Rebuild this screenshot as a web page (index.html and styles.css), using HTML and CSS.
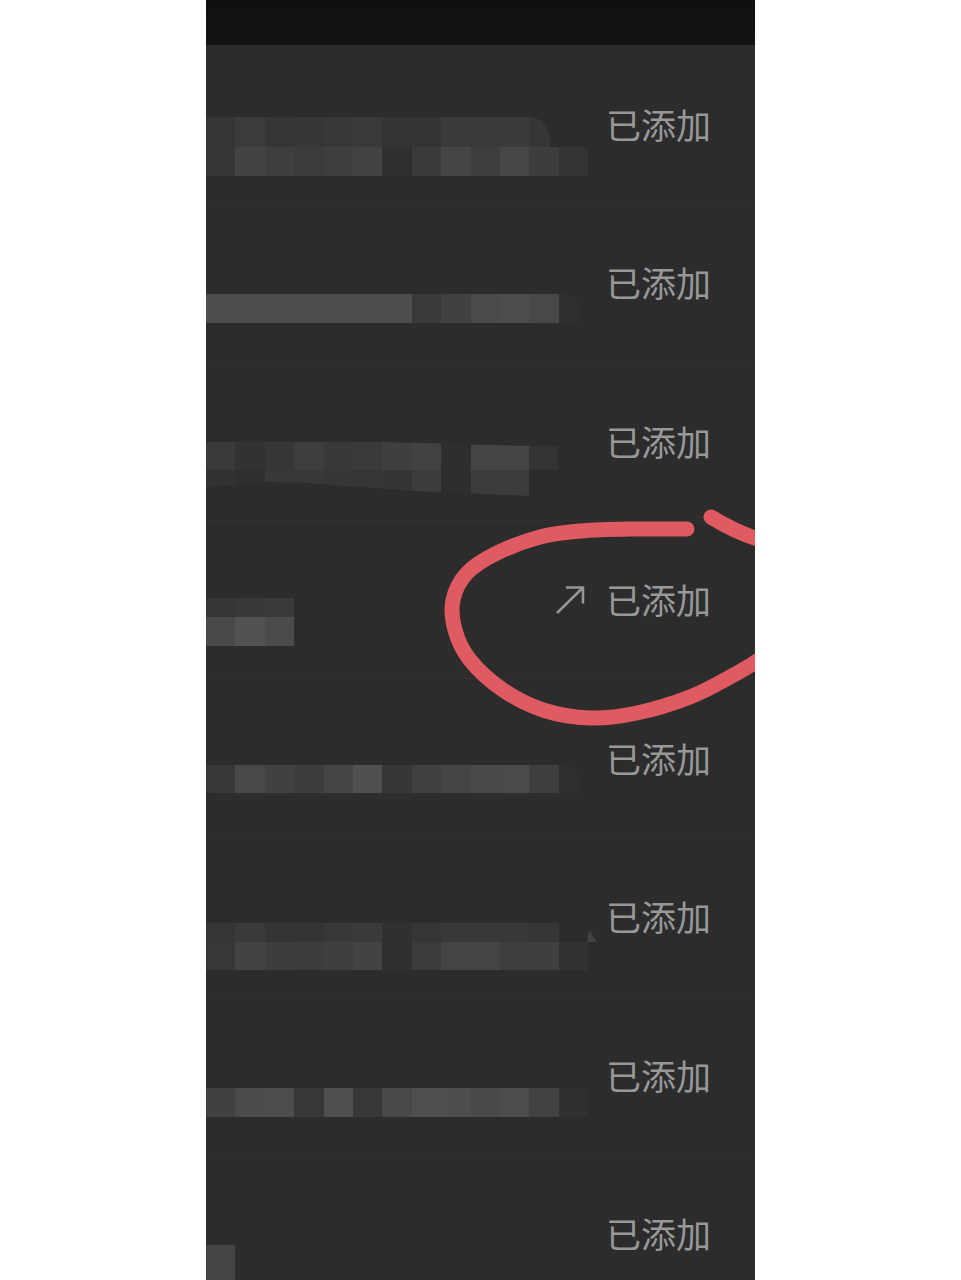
FILE: index.html
```html
<!DOCTYPE html>
<html lang="zh-CN">
<head>
<meta charset="utf-8">
<title>已添加</title>
<link rel="stylesheet" href="styles.css">
</head>
<body>
<main class="panel">
  <header class="topbar"></header>
  <ul class="list">
    <li class="row">
      <div class="mosaic m1">
        <i class="g35"></i><i class="g3b"></i><i class="g35"></i><i class="g36"></i><i class="g38"></i><i class="g39"></i><i class="g34"></i><i class="g34"></i><i class="g3a"></i><i class="g39"></i><i class="g3a"></i><i class="g36 corner"></i><i></i>
        <i class="g36"></i><i class="g43"></i><i class="g3e"></i><i class="g3b"></i><i class="g3f"></i><i class="g42"></i><i class="g2f"></i><i class="g3a"></i><i class="g45"></i><i class="g3e"></i><i class="g46"></i><i class="g3d"></i><i class="g33"></i>
      </div>
      <span class="status">已添加</span>
    </li>
    <li class="row">
      <div class="mosaic m2">
        <i class="g4d"></i><i class="g4d"></i><i class="g4d"></i><i class="g4c"></i><i class="g4c"></i><i class="g4d"></i><i class="g4d"></i><i class="g39"></i><i class="g41"></i><i class="g4a"></i><i class="g4c"></i><i class="g48"></i><i class="g2f tail"></i>
      </div>
      <span class="status">已添加</span>
    </li>
    <li class="row">
      <div class="mosaic m3">
        <i class="g3a"></i><i class="g32"></i><i class="g36"></i><i class="g3e"></i><i class="g38"></i><i class="g3a"></i><i class="g3f"></i><i class="g42"></i><i class="g2e"></i><i class="g45"></i><i class="g45"></i><i class="g33"></i>
        <i class="g32"></i><i class="g2f"></i><i class="g38"></i><i class="g38"></i><i class="g36"></i><i class="g35"></i><i class="g34"></i><i class="g3c"></i><i class="g2e"></i><i class="g3b"></i><i class="g3c"></i><i></i>
      </div>
      <span class="status">已添加</span>
    </li>
    <li class="row">
      <div class="mosaic m4">
        <i class="g35"></i><i class="g38"></i><i class="g3a"></i>
        <i class="g49"></i><i class="g52"></i><i class="g4b"></i>
      </div>
      <span class="status-group">
        <svg class="share" viewBox="0 0 30 30" aria-hidden="true"><path d="M2 27 L28 1.500 M11 1.500 H28 V17.500"/></svg>
        <span class="status">已添加</span>
      </span>
    </li>
    <li class="row">
      <div class="mosaic m5">
        <i class="g38"></i><i class="g48"></i><i class="g41"></i><i class="g3d"></i><i class="g45"></i><i class="g50"></i><i class="g36"></i><i class="g40"></i><i class="g44"></i><i class="g49"></i><i class="g4a"></i><i class="g3e"></i><i class="g2f tail"></i>
      </div>
      <span class="status">已添加</span>
    </li>
    <li class="row">
      <div class="mosaic m6">
        <i class="g35"></i><i class="g3a"></i><i class="g34"></i><i class="g34"></i><i class="g38"></i><i class="g3a"></i><i class="g30"></i><i class="g35"></i><i class="g38"></i><i class="g38"></i><i class="g38"></i><i class="g36"></i><i></i>
        <i class="g37"></i><i class="g43"></i><i class="g3d"></i><i class="g3c"></i><i class="g3f"></i><i class="g43"></i><i class="g2f"></i><i class="g3b"></i><i class="g44"></i><i class="g44"></i><i class="g3e"></i><i class="g3f"></i><i class="g32"></i>
      </div>
      <span class="status">已添加</span>
    </li>
    <li class="row">
      <div class="mosaic m7">
        <i class="g41"></i><i class="g4b"></i><i class="g4d"></i><i class="g37"></i><i class="g4f"></i><i class="g38"></i><i class="g48"></i><i class="g4f"></i><i class="g4e"></i><i class="g49"></i><i class="g4c"></i><i class="g42"></i><i class="g30"></i>
      </div>
      <span class="status">已添加</span>
    </li>
    <li class="row">
      <div class="mosaic m8"><i class="g44"></i></div>
      <span class="status">已添加</span>
    </li>
  </ul>
  <svg class="markup" viewBox="0 0 549 1280" aria-hidden="true">
    <path d="M481 529 C471.500 529 441.800 528.700 424 529 C406.200 529.300 389 529.700 374 531 C359 532.300 347.800 533.300 334 537 C320.200 540.700 303.200 547 291 553 C278.800 559 268.300 565.200 261 573 C253.700 580.800 249 590.500 247 600 C245 609.500 246.200 620 249 630 C251.800 640 256 650 264 660 C272 670 284.800 681.700 297 690 C309.200 698.300 322.500 705.300 337 710 C351.500 714.700 368.300 717.500 384 718 C399.700 718.500 414.300 716.500 431 713 C447.700 709.500 468.500 703 484 697 C499.500 691 512.200 683.500 524 677 C535.800 670.500 550 662 555 658"/>
    <path d="M505 517 C518 525 535 534 555 540"/>
  </svg>
</main>
</body>
</html>
```
FILE: styles.css
```css
* { box-sizing: border-box; }

html, body { margin: 0; padding: 0; background: #fff; }

.panel {
  position: relative;
  width: 549px;
  height: 1280px;
  margin: 0 auto;
  overflow: hidden;
  background: #2c2c2c;
}

.topbar { height: 45px; background: linear-gradient(#101010, #121212); }

.list { list-style: none; margin: 0; padding: 0; }

.row {
  display: flex;
  justify-content: space-between;
  align-items: flex-start;
  height: 158.5px;
  padding-right: 44px;
  border-bottom: 1px solid #313131;
}

.status {
  font-family: "Noto Sans CJK SC", "Noto Sans", sans-serif;
  font-size: 35px;
  line-height: 40px;
  color: #989898;
  white-space: nowrap;
}

.row > .status, .status-group { align-self: center; }

.status-group { display: flex; align-items: center; gap: 21px; }

.share { width: 30px; height: 30px; position: relative; top: 2px; }
.share path { fill: none; stroke: #969696; stroke-width: 2.5; }

.mosaic { display: grid; grid-template-columns: repeat(13, 29.4px); }

.m1 { margin-top: 72px; grid-template-rows: 30px 29px; }
.m2 { margin-top: 90.5px; grid-template-rows: 29px; }
.m3 {
  margin-top: 79px;
  grid-template-columns: repeat(12, 29.4px);
  grid-template-rows: 29px 26px;
  clip-path: polygon(0 1px, 176px 1px, 323px 5px, 352px 5px, 352px 29px, 323px 29px, 323px 55px, 207px 50px, 100px 42px, 60px 41px, 0 46px);
}
.m4 { margin-top: 77.5px; grid-template-columns: repeat(3, 29.4px); grid-template-rows: 19px 29px; }
.m5 { margin-top: 86px; grid-template-rows: 28px; box-shadow: 0 12px 8px -6px #2f2f2f; }
.m6 { position: relative; margin-top: 85.5px; grid-template-rows: 19px 28px; }
.m6::after {
  content: "";
  position: absolute;
  left: 381px;
  top: 7px;
  width: 10px;
  height: 12px;
  background: #414141;
  clip-path: polygon(20% 0, 100% 100%, 0 100%);
}
.m7 { margin-top: 92px; grid-template-rows: 29px; }
.m8 { margin-top: 90.5px; grid-template-columns: 29.4px; grid-template-rows: 40px; }

.corner { margin-right: 9px; border-top-right-radius: 20px 24px; }
.tail { margin-right: 7px; border-radius: 0 18px 8px 0; }

.g2e { background: #2e2e2e; }
.g2f { background: #2f2f2f; }
.g30 { background: #303030; }
.g32 { background: #323232; }
.g33 { background: #333333; }
.g34 { background: #343434; }
.g35 { background: #353535; }
.g36 { background: #363636; }
.g37 { background: #373737; }
.g38 { background: #383838; }
.g39 { background: #393939; }
.g3a { background: #3a3a3a; }
.g3b { background: #3b3b3b; }
.g3c { background: #3c3c3c; }
.g3d { background: #3d3d3d; }
.g3e { background: #3e3e3e; }
.g3f { background: #3f3f3f; }
.g40 { background: #404040; }
.g41 { background: #414141; }
.g42 { background: #424242; }
.g43 { background: #434343; }
.g44 { background: #444444; }
.g45 { background: #454545; }
.g46 { background: #464646; }
.g48 { background: #484848; }
.g49 { background: #494949; }
.g4a { background: #4a4a4a; }
.g4b { background: #4b4b4b; }
.g4c { background: #4c4c4c; }
.g4d { background: #4d4d4d; }
.g4e { background: #4e4e4e; }
.g4f { background: #4f4f4f; }
.g50 { background: #505050; }
.g52 { background: #525252; }

.markup {
  position: absolute;
  left: 0;
  top: 0;
  width: 549px;
  height: 1280px;
}
.markup path {
  fill: none;
  stroke: #e05a62;
  stroke-width: 15;
  stroke-linecap: round;
  stroke-linejoin: round;
}
```
